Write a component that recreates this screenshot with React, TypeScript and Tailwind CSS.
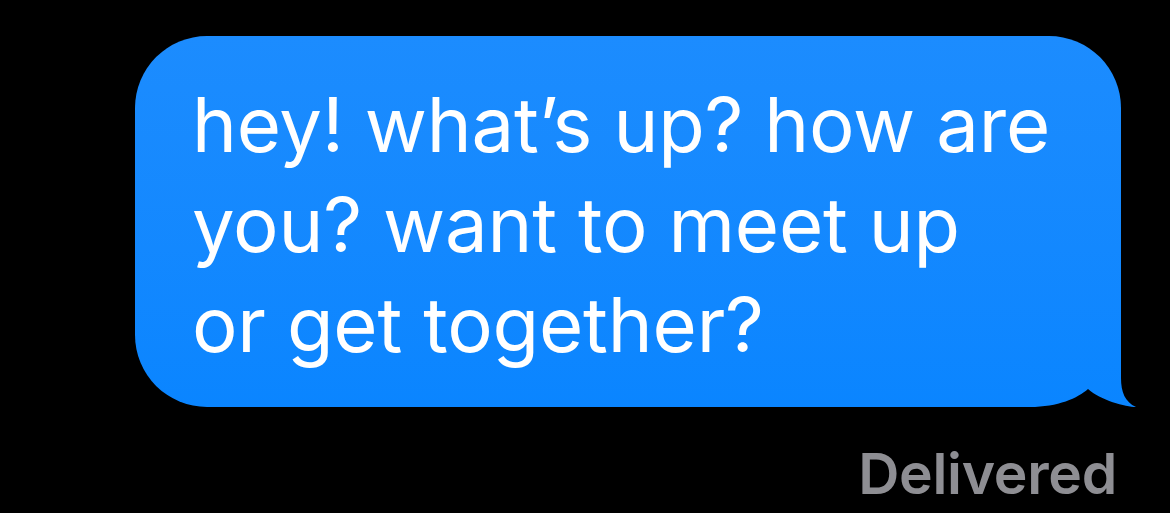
const BubbleTail = () => (
  <svg
    className="absolute right-[-19px] bottom-[-3px] block"
    width="110"
    height="80"
    viewBox="0 0 110 80"
  >
    <defs>
      <linearGradient id="tailFill" gradientUnits="userSpaceOnUse" x1="0" y1="-294" x2="0" y2="77">
        <stop offset="0" stopColor="#1c8cfe" />
        <stop offset="1" stopColor="#0a85ff" />
      </linearGradient>
    </defs>
    <rect x="0" y="0" width="91" height="77" fill="#000" />
    <path
      d="M0 0 L91 0 L91 48 C91 62 95 72 106 77 C96 77 70 70 58 59 C48 68 28 77 0 77 Z"
      fill="url(#tailFill)"
    />
  </svg>
);

export default function App() {
  return (
    <div className="w-[1170px] h-[513px] bg-black overflow-hidden font-['Inter','Liberation_Sans',sans-serif]">
      <div className="ml-[135px] pt-[36px]">
        <div className="relative w-[986px] h-[371px] rounded-[72px] rounded-br-none bg-gradient-to-b from-[#1c8cfe] to-[#0a85ff] pl-[57px] pt-[38px]">
          <p className="text-white text-[76px] leading-[100px] tracking-[-0.2px] whitespace-nowrap">
            hey! what’s up? how are
            <br />
            you? want to meet up
            <br />
            or get together?
          </p>
          <BubbleTail />
        </div>
      </div>
      <div className="flex justify-end pr-[53px] mt-[32px]">
        <span className="text-[#8e8e93] text-[57px] leading-[70px] font-semibold tracking-[-0.3px]">
          Delivered
        </span>
      </div>
    </div>
  );
}
